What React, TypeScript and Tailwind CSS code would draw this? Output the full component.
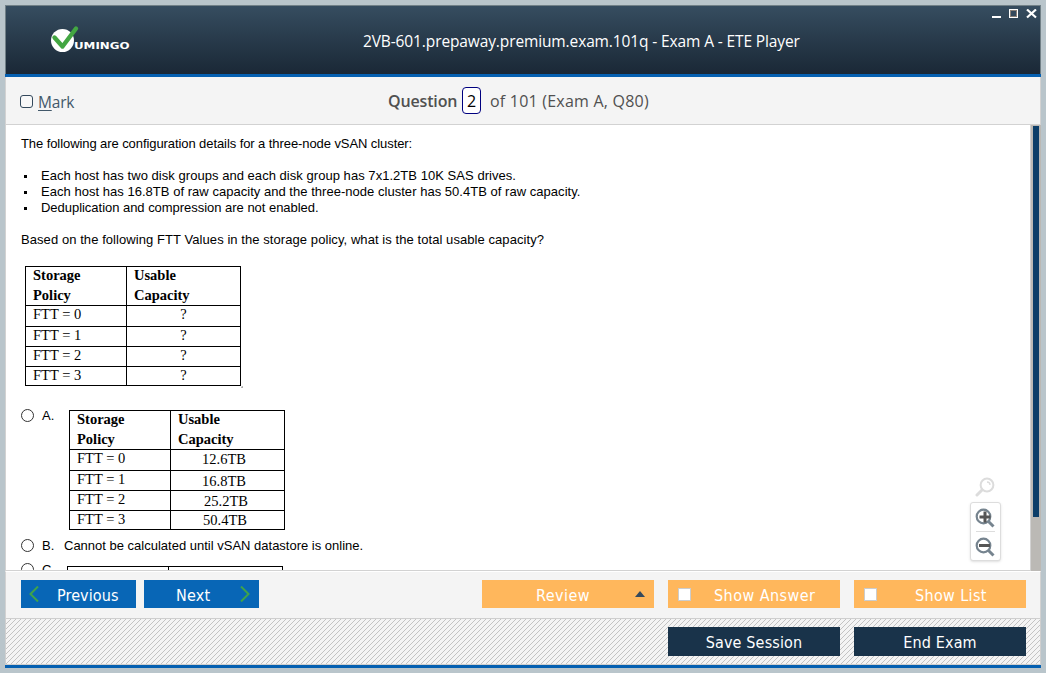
import type { ReactNode } from "react";

const policies = ["FTT = 0", "FTT = 1", "FTT = 2", "FTT = 3"];
const rowHeights = ["h-[21px]", "h-5", "h-5", "h-[19px]"];
const cell = "border-r border-b border-black";

function PolicyTable({ values, shifts }: { values: string[]; shifts: string[] }) {
  return (
    <div className="w-[216px] shrink-0 border-l border-t border-black font-['Liberation_Serif',serif] text-[14.500px] leading-4">
      <div className="flex h-[39px] font-bold leading-5">
        <div className={`${cell} w-[101px] pl-[7px]`}>
          <div className="-mt-0.5">Storage</div>
          <div>Policy</div>
        </div>
        <div className={`${cell} w-[114px] pl-[7px]`}>
          <div className="-mt-0.5">Usable</div>
          <div>Capacity</div>
        </div>
      </div>
      {policies.map((policy, i) => (
        <div key={policy} className={`flex ${rowHeights[i]}`}>
          <div className={`${cell} w-[101px] pl-[7px]`}>{policy}</div>
          <div className={`${cell} w-[114px] text-center`}>
            <div className={shifts[i]}>{values[i]}</div>
          </div>
        </div>
      ))}
    </div>
  );
}

function Option({ letter, className, children }: { letter: string; className: string; children: ReactNode }) {
  return (
    <div className={`flex items-start ${className}`}>
      <div className="flex h-4 w-[43px] shrink-0 items-center gap-2">
        <span className="size-[13px] shrink-0 rounded-full border border-[#333] bg-white" />
        <span className="pt-[2px]">{letter}</span>
      </div>
      {children}
    </div>
  );
}

function Logo() {
  return (
    <svg width="84" height="30" viewBox="0 0 84 30" className="ml-[44px]">
      <circle cx="12.5" cy="15.500" r="11.5" fill="#fff" />
      <path d="M4.5 12.500L12.5 21.500L26 3.500" fill="none" stroke="#43a642" strokeWidth="4.400" strokeLinecap="round" strokeLinejoin="round" />
      <text x="24" y="24" fill="#fff" fontFamily="DejaVu Sans, sans-serif" fontWeight="bold" fontSize="9.500" textLength="55.500" lengthAdjust="spacingAndGlyphs">UMINGO</text>
    </svg>
  );
}

function WindowControls() {
  return (
    <svg width="46" height="10" viewBox="0 0 46 10" className="absolute right-[2px] top-[3px]" shapeRendering="crispEdges">
      <path d="M0 7h9v2H0z" fill="#fff" />
      <path d="M17 0h9v9h-9z" fill="#fff" />
      <path d="M18 1h7v7h-7z" fill="#8a8078" />
      <path d="M19 2h5v5h-5z" fill="#34495c" />
      <path d="M35 0.500L44 8.500M44 0.500L35 8.500" stroke="#fff" strokeWidth="2.200" shapeRendering="auto" />
    </svg>
  );
}

function Hatch() {
  return (
    <svg className="absolute inset-0 size-full" aria-hidden="true">
      <defs>
        <pattern id="hatch" width="5" height="5" patternUnits="userSpaceOnUse">
          <path d="M0 4h1v1H0zM1 3h1v1H1zM2 2h1v1H2zM3 1h1v1H3zM4 0h1v1H4z" fill="#c3c3c3" shapeRendering="crispEdges" />
        </pattern>
      </defs>
      <rect width="100%" height="100%" fill="url(#hatch)" />
    </svg>
  );
}

function ZoomTools() {
  return (
    <div className="absolute right-[40px] top-[352px] flex w-[31px] flex-col items-center">
      <svg width="20" height="20" viewBox="0 0 20 20" fill="none" className="mb-[5px] mr-px">
        <circle cx="12" cy="8" r="6.400" stroke="#dcdcdc" strokeWidth="2" />
        <path d="M12 5a3 3 0 0 1 3 3" stroke="#dcdcdc" strokeWidth="1.300" />
        <path d="M7 13L2 18" stroke="#dcdcdc" strokeWidth="3" strokeLinecap="round" />
      </svg>
      <div className="flex h-[59px] w-[31px] flex-col items-center rounded-[3px] border border-[#ddd] bg-white shadow-sm">
        <svg width="20" height="20" viewBox="0 0 20 20" fill="none" className="mr-px mt-[5px]">
          <circle cx="8.500" cy="8.500" r="6.800" stroke="#76848f" strokeWidth="2.200" />
          <path d="M13.500 13.500L18.500 18.500" stroke="#76848f" strokeWidth="3" />
          <path d="M4.500 9h11M10 3.500v11" stroke="#555" strokeWidth="3" />
        </svg>
        <div className="mt-[3px] h-px w-[19px] bg-[#ddd]" />
        <svg width="20" height="20" viewBox="0 0 20 20" fill="none" className="mr-px mt-[5px]">
          <circle cx="8.500" cy="8.500" r="6.800" stroke="#76848f" strokeWidth="2.200" />
          <path d="M13.500 13.500L18.500 18.500" stroke="#76848f" strokeWidth="3" />
          <path d="M4 8.500h11" stroke="#555" strokeWidth="3" />
        </svg>
      </div>
    </div>
  );
}

const bullets = [
  { text: "Each host has two disk groups and each disk group has 7x1.2TB 10K SAS drives.", spacing: "tracking-[0.04px]" },
  { text: "Each host has 16.8TB of raw capacity and the three-node cluster has 50.4TB of raw capacity.", spacing: "tracking-[0.03px]" },
  { text: "Deduplication and compression are not enabled.", spacing: "tracking-[-0.03px]" },
];

export default function App() {
  return (
    <div className="h-[673px] w-[1046px] overflow-hidden bg-[#b9c5cb] p-[5px] font-['Open_Sans',sans-serif]">
      <div className="flex h-[663px] w-[1036px] flex-col">
        <header className="relative flex h-[69px] shrink-0 border border-b-0 border-[#718087] bg-linear-to-b from-[#364d60] to-[#1a2836]">
          <div className="pt-[19px]"><Logo /></div>
          <h1 className="ml-[229px] pt-[24px] whitespace-nowrap text-[15.500px] leading-[22px] tracking-[-0.12px] text-white">
            2VB-601.prepaway.premium.exam.101q - Exam A - ETE Player
          </h1>
          <WindowControls />
        </header>
        <div className="h-[3px] shrink-0 bg-[#0560b1]" />

        <div className="flex h-12 shrink-0 items-center border-x border-b border-[#d2d2d2] bg-[#f4f4f4] text-[16px] text-[#505050]">
          <label className="ml-[14px] flex w-[368px] items-center gap-[5px] pt-[2px] text-[15.500px] tracking-[-0.2px] text-[#42586a]">
            <span className="size-[13px] rounded-[3px] border border-[#34495c] bg-[#f8f8f8]" />
            <span className="pt-[2px]"><u className="underline-offset-2">M</u>ark</span>
          </label>
          <span className="w-[74px] font-semibold tracking-[-0.15px]">Question</span>
          <span className="flex h-[27px] w-[19px] items-center justify-center rounded-[4px] border border-[#00007f] bg-white text-black">2</span>
          <span className="ml-[9px] whitespace-nowrap tracking-[0.22px]">of 101 (Exam A, Q80)</span>
        </div>

        <main className="relative flex h-[446px] shrink-0 border-b border-[#d2d2d2] bg-white">
          <div className="h-[445px] w-[1025px] overflow-hidden border-l border-[#d2d2d2] pl-[15px] pt-[11px] font-['Liberation_Sans',sans-serif] text-[13px] leading-4 text-black">
            <p className="tracking-[-0.08px]">The following are configuration details for a three-node vSAN cluster:</p>
            <ul className="my-4">
              {bullets.map((b) => (
                <li key={b.text} className="flex items-center">
                  <span className="ml-[3px] mr-[14px] size-[3px] bg-black" />
                  <span className={b.spacing}>{b.text}</span>
                </li>
              ))}
            </ul>
            <p className="tracking-[0.07px]">Based on the following FTT Values in the storage policy, what is the total usable capacity?</p>
            <div className="ml-1 mt-[18px] flex items-end">
              <PolicyTable values={["?", "?", "?", "?"]} shifts={["", "", "", ""]} />
              <span className="-mb-0.5 size-0.5 rounded-tl-full bg-[#aaa]" />
            </div>
            <Option letter="A." className="mt-[21px]">
              <div className="ml-[5px] mt-[3px]">
                <PolicyTable values={["12.6TB", "16.8TB", "25.2TB", "50.4TB"]} shifts={["pt-px pr-[7px]", "pt-[2px] pr-[7px]", "pt-[2px] pr-[3px]", "pt-px pr-[5px]"]} />
              </div>
            </Option>
            <Option letter="B." className="mt-[7px]">
              <span className="-mb-px pt-px">Cannot be calculated until vSAN datastore is online.</span>
            </Option>
            <Option letter="C." className="mt-[8px]">
              <div className="ml-[3px] mt-[5px] flex h-5 w-[216px] border-l border-t border-black">
                <div className="w-[101px] border-r border-black" />
                <div className="w-[114px] border-r border-black" />
              </div>
            </Option>
          </div>
          <div className="h-[446px] w-[11px] border-l border-[#d2d2d2] bg-[#bbb9b5] pl-[2px] pt-px">
            <div className="h-[391px] w-[6px] bg-[#0c3e69]" />
          </div>
          <ZoomTools />
        </main>

        <div className="flex h-12 shrink-0 border-x border-b border-t border-x-[#d2d2d2] border-b-[#cfcfcf] border-t-white bg-[#f4f4f4] pl-[15px] pt-[8px] font-['DejaVu_Sans_Condensed','DejaVu_Sans',sans-serif] text-[16px] text-white">
          <button className="flex h-[28px] w-[115px] items-center bg-[#0866b6] pl-[8px]">
            <svg width="10" height="16" viewBox="0 0 10 16" fill="none"><path d="M9 0.500L1.500 8L9 15.500" stroke="#3fa34a" strokeWidth="2" /></svg>
            <span className="ml-[18px] pt-[3px] tracking-[0.1px]">Previous</span>
          </button>
          <button className="ml-2 flex h-[28px] w-[115px] items-center justify-between bg-[#0866b6] pl-[32px] pr-[9px]">
            <span className="pt-[3px] tracking-[0.2px]">Next</span>
            <svg width="10" height="16" viewBox="0 0 10 16" fill="none"><path d="M1 0.500L8.500 8L1 15.500" stroke="#3fa34a" strokeWidth="2" /></svg>
          </button>
          <button className="ml-[223px] flex h-[28px] w-[172px] items-center justify-between bg-[#ffb75c] pl-[54px] pr-[9px]">
            <span className="pt-[3px] tracking-[0.45px]">Review</span>
            <svg width="10" height="6" viewBox="0 0 10 6"><path d="M5 0L10 6H0z" fill="#34495c" /></svg>
          </button>
          <button className="ml-[14px] flex h-[28px] w-[172px] items-center bg-[#ffb75c] pl-[10px]">
            <span className="size-[13px] border border-[#ccc] bg-white" />
            <span className="ml-[23px] pt-[3px] tracking-[0.45px]">Show Answer</span>
          </button>
          <button className="ml-[14px] flex h-[28px] w-[172px] items-center bg-[#ffb75c] pl-[10px]">
            <span className="size-[13px] border border-[#ccc] bg-white" />
            <span className="ml-[38px] pt-[3px] tracking-[0.35px]">Show List</span>
          </button>
        </div>

        <div className="relative h-[46px] shrink-0 border-x border-b border-[#cfcfcf] bg-[#f4f4f4]">
          <Hatch />
          <div className="relative flex justify-end gap-[14px] pr-[14px] pt-2 font-['DejaVu_Sans_Condensed','DejaVu_Sans',sans-serif] text-[16px] text-white">
            <button className="h-[29px] w-[172px] bg-[#19334a] pt-[2px] tracking-[0.15px]">Save Session</button>
            <button className="h-[29px] w-[172px] bg-[#19334a] pt-[2px] tracking-[0.15px]">End Exam</button>
          </div>
        </div>
        <div className="h-[3px] shrink-0 bg-[#0560b1]" />
      </div>
    </div>
  );
}
